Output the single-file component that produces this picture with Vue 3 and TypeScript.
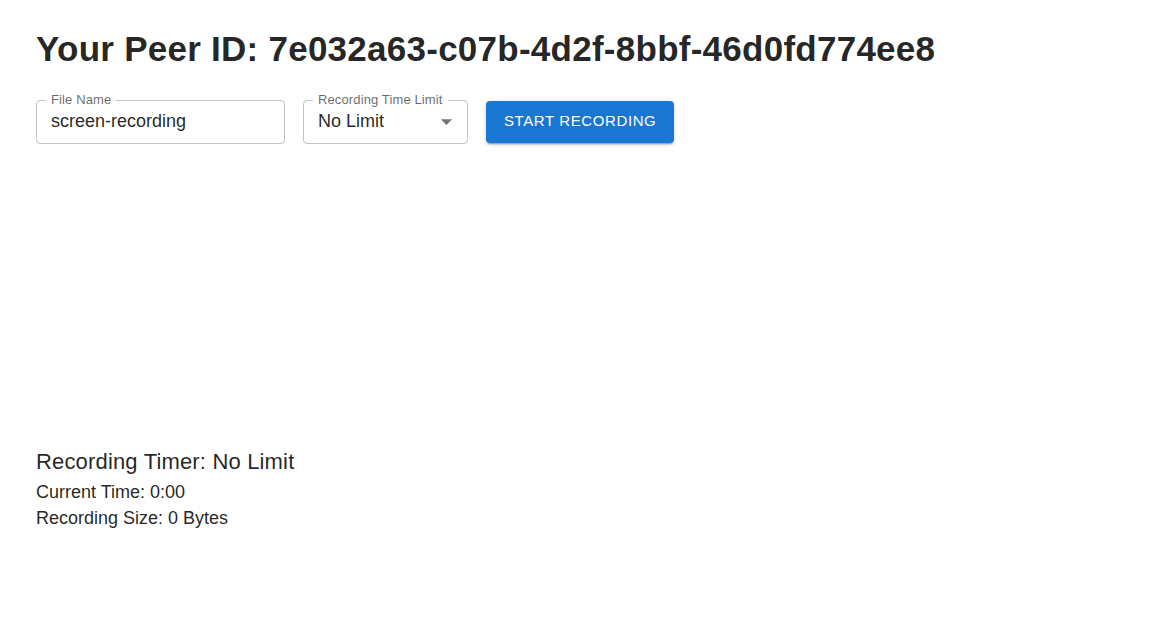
<script setup lang="ts">
import { computed, ref } from 'vue'

const peerId = '7e032a63-c07b-4d2f-8bbf-46d0fd774ee8'
const fileName = ref('screen-recording')
const limit = ref('No Limit')
const limits: string[] = ['No Limit', '1 Minute', '5 Minutes', '10 Minutes', '30 Minutes']
const recording = ref(false)
const buttonText = computed(() => (recording.value ? 'Stop Recording' : 'Start Recording'))
</script>

<template>
  <main class="page">
    <h1 class="title">Your Peer ID: {{ peerId }}</h1>
    <form class="controls" @submit.prevent="recording = !recording">
      <div class="field field-name">
        <label class="label" for="file-name">File Name</label>
        <input id="file-name" v-model="fileName" class="control" type="text" />
      </div>
      <div class="field field-limit">
        <label class="label" for="time-limit">Recording Time Limit</label>
        <select id="time-limit" v-model="limit" class="control select">
          <option v-for="item in limits" :key="item">{{ item }}</option>
        </select>
        <svg class="arrow" viewBox="0 0 24 24" aria-hidden="true"><path d="M7 10l5 5 5-5z" /></svg>
      </div>
      <button class="start" type="submit">{{ buttonText }}</button>
    </form>
    <div class="preview"></div>
    <section class="status">
      <h2 class="timer">Recording Timer: {{ limit }}</h2>
      <p class="line">Current Time: 0:00</p>
      <p class="line">Recording Size: 0 Bytes</p>
    </section>
  </main>
</template>

<style scoped>
.page {
  padding: 27px 36px;
  color: rgba(0, 0, 0, 0.87);
  font-family: "Liberation Sans", Arial, sans-serif;
}
.title {
  margin: 0;
  font-size: 35px;
  line-height: 44px;
  font-weight: 700;
  letter-spacing: 0.00735em;
}
.controls {
  display: flex;
  align-items: center;
  flex-wrap: wrap;
  gap: 18px;
  margin-top: 29px;
}
.field {
  position: relative;
}
.field-name {
  width: 249px;
}
.field-limit {
  width: 165px;
}
.label {
  position: absolute;
  top: -8px;
  left: 10px;
  padding: 0 5px;
  background: #fff;
  color: rgba(0, 0, 0, 0.6);
  font-size: 13px;
  line-height: 16px;
  letter-spacing: 0.00938em;
  white-space: nowrap;
}
.control {
  display: block;
  box-sizing: border-box;
  width: 100%;
  height: 44px;
  margin: 0;
  padding: 0 14px 2px;
  border: 1px solid rgba(0, 0, 0, 0.23);
  border-radius: 4px;
  background: transparent;
  color: inherit;
  font: 18px "Liberation Sans", Arial, sans-serif;
  outline: none;
}
.select {
  padding: 0 36px 2px 14px;
  appearance: none;
}
.control:focus {
  border-color: #1976d2;
}
.arrow {
  position: absolute;
  top: 8px;
  right: 8px;
  width: 27px;
  height: 27px;
  fill: rgba(0, 0, 0, 0.54);
  pointer-events: none;
}
.start {
  padding: 7px 18px 9px;
  border: 0;
  border-radius: 4px;
  background: #1976d2;
  color: #fff;
  font: 15px/26px "Liberation Sans", Arial, sans-serif;
  letter-spacing: 0.04em;
  text-transform: uppercase;
  box-shadow: 0 3px 1px -2px rgba(0, 0, 0, 0.2), 0 2px 2px rgba(0, 0, 0, 0.14), 0 1px 5px rgba(0, 0, 0, 0.12);
  cursor: pointer;
}
.preview {
  height: 300px;
}
.timer {
  margin: 0;
  font-size: 22px;
  line-height: 35px;
  font-weight: 400;
  letter-spacing: 0.0075em;
}
.line {
  margin: 0;
  font-size: 18px;
  line-height: 26px;
}
</style>
